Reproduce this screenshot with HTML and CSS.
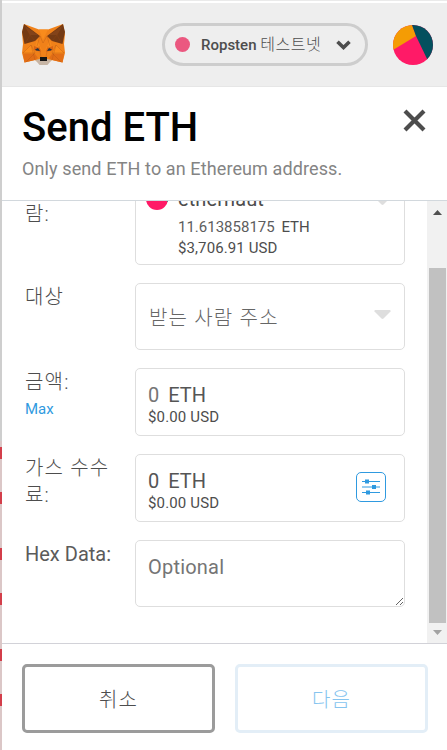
FILE: index.html
```html
<!DOCTYPE html>
<html lang="ko">
<head>
<meta charset="utf-8">
<title>Send ETH</title>
<link rel="stylesheet" href="styles.css">
</head>
<body>
<div class="window">
  <div class="edge">
    <i class="mark m1"></i><i class="mark m2"></i><i class="mark m3"></i><i class="mark m4"></i><i class="mark m5"></i><i class="mark m6"></i>
  </div>
  <div class="popup">
    <header class="app-header">
      <svg class="fox" width="43" height="42" viewBox="0 0 43 42">
        <path fill="#f08119" d="M2 0 17 5.500h9L41 0l2 10-1 10 1 9-2.500 9.500L30 36l-5 4h-7l-5-4-10.500 2.500L0 29l1-9L0 9z"/>
        <path fill="#e26e16" d="M1 30h12l3 4-3 2-10.500 2.500zM42 30H30l-3 4 3 2 10.500 2.500z"/>
        <path fill="#f98b1c" d="M17 5.500l4 10.500 5-10.500zM15 16l-2 7 7 3zM28 16l2 7-7 3zM1 29l8-8 4 8zM42 29l-8-8-4 8z"/>
        <path fill="#743a14" d="M2 0 18 12 13 17 2.500 20 0 8zM41 0 25 12l5 5 10.500 3L43 8z"/>
        <path fill="#83431a" d="M3 2 8 11l8 0zM40 2l-5 9-8 0z"/>
        <path fill="none" stroke="#9f4b12" stroke-opacity=".65" stroke-width=".4" d="M3 20 8 11l5 6M8 11 3 2M40 20l-5-9-5 6M35 11l5-9M18 12l3 7 4-7M18 12l-3 10M25 12l3 10M1 29l8-8 4 8zM42 29l-8-8-4 8zM9 21l4 15M34 21l-4 15M17 22l2 11M26 22l-2 11M4 38l9-9M39 38 30 29"/>
        <path fill="#d96514" d="m12 22 6 2 1 4-7-2zM31 22l-6 2-1 4 7-2z"/>
        <path fill="#273342" d="m13 25.500 3-1.500 2 3-4-.5zM30 25.500 27 24l-2 3 4-.5z"/>
        <path fill="#c6b5a5" d="m13.500 36 4.500-1h7l4.500 1-4 5h-8z"/>
        <path fill="#151515" d="M18 33h7v4h-7z"/>
      </svg>
      <div class="network"><span class="dot"></span><span class="network-name">Ropsten <span class="ko">테스트넷</span></span>
        <svg class="chevron" width="15" height="10" viewBox="0 0 15 10"><path d="m1.500 1.700 6 5.800 6-5.800" fill="none" stroke="#4d4d4d" stroke-width="3.600"/></svg>
      </div>
      <svg class="avatar" width="40" height="40" viewBox="0 0 40 40">
        <defs><clipPath id="round"><circle cx="20" cy="20" r="20"/></clipPath></defs>
        <g clip-path="url(#round)"><path fill="#ff1a67" d="M0 0h40v40H0z"/><path fill="#f49c04" d="M0 0h19l4 11L0 25z"/><path fill="#03505e" d="M19 0h21v40h-3L23 11z"/></g>
      </svg>
    </header>
    <div class="page-header">
      <div class="title-row"><h1>Send ETH</h1>
        <svg class="close" width="23" height="23" viewBox="0 0 23 23"><path d="m2 2 19 19M21 2 2 21" stroke="#4d4d4d" stroke-width="4.2"/></svg>
      </div>
      <p>Only send ETH to an Ethereum address.</p>
    </div>
    <div class="content">
      <main class="form">
        <div class="row from"><div class="label ko">람:</div>
          <div class="box account">
            <span class="account-icon"></span>
            <div class="account-info"><div class="account-name">ethernaut</div><div class="balance">11.613858175 <span>ETH</span></div><div class="usd">$3,706.91 USD</div></div>
            <svg class="caret" width="17" height="10" viewBox="0 0 17 10"><path fill="#dedede" d="M1 0h15q1 .5.5 1.500L9.500 8.500q-1 .8-2 0L.5 1.500Q0 .5 1 0z"/></svg>
          </div>
        </div>
        <div class="row to"><div class="label ko">대상</div>
          <div class="box recipient"><span class="ko">받는 사람 주소</span>
            <svg class="caret" width="17" height="10" viewBox="0 0 17 10"><path fill="#dedede" d="M1 0h15q1 .5.5 1.500L9.500 8.500q-1 .8-2 0L.5 1.500Q0 .5 1 0z"/></svg>
          </div>
        </div>
        <div class="row"><div class="label ko">금액:<a class="max">Max</a></div>
          <div class="box amount"><div class="value"><span class="zero muted">0</span>ETH</div><div class="fiat">$0.00 USD</div></div>
        </div>
        <div class="row"><div class="label ko">가스 수수료:</div>
          <div class="box gas"><div class="amount"><div class="value"><span class="zero">0</span>ETH</div><div class="fiat">$0.00 USD</div></div>
            <div class="adjust"><svg width="18" height="16" viewBox="0 0 18 16"><path d="M0 2.500h18M0 8h18M0 13.500h18" stroke="#2f9ae0"/><path fill="#2f9ae0" d="M3 .5h4v4H3zM10 6h4v4h-4zM4 11.500h4v4H4z"/></svg></div>
          </div>
        </div>
        <div class="row hex"><div class="label">Hex Data:</div><textarea class="box" placeholder="Optional"></textarea></div>
      </main>
      <div class="scrollbar">
        <svg width="9" height="5" viewBox="0 0 9 5"><path fill="#505050" d="M4.500 0 9 5H0z"/></svg>
        <div class="thumb"></div>
        <svg width="9" height="5" viewBox="0 0 9 5"><path fill="#a3a3a3" d="M0 0h9L4.500 5z"/></svg>
      </div>
    </div>
    <footer><button class="cancel ko">취소</button><button class="next ko">다음</button></footer>
  </div>
</div>
</body>
</html>
```
FILE: styles.css
```css
* { box-sizing: border-box; }
body { margin: 0; font-family: Roboto, "Noto Sans CJK KR", sans-serif; color: #4d4d4d; background: #fff; }
.window { display: flex; width: 447px; height: 750px; overflow: hidden; }
.edge { position: relative; width: 2px; flex: none; background: linear-gradient(#cecece 441px, #dbc7c7 441px); }
.mark { position: absolute; left: 0; width: 2px; height: 12px; background: #d33e4a; }
.m1 { top: 447px; } .m2 { top: 492px; } .m3 { top: 548px; } .m4 { top: 593px; } .m5 { top: 649px; } .m6 { top: 694px; }
.popup { display: flex; flex-direction: column; width: 445px; border-top: 1px solid #eaeaea; }
.ko { font-family: Roboto, "Noto Sans CJK KR", sans-serif; font-weight: 300; letter-spacing: 1.2px; }
.app-header { display: flex; align-items: center; height: 84px; margin-top: 2px; padding: 0 14px 0 20px; background: #eee; border-bottom: 1px solid #e6e6e6; flex: none; }
.network { display: flex; align-items: center; width: 206px; height: 43px; margin-left: 97px; padding: 0 14px 0 10px; border: 3px solid #cdcdcd; border-radius: 22px; }
.dot { width: 15px; height: 15px; border-radius: 50%; background: #eb5880; margin-right: 11px; }
.network-name { font-size: 15px; font-weight: 500; line-height: 20px; white-space: nowrap; }
.network-name .ko { font-size: 16px; letter-spacing: .5px; font-weight: 300; }
.chevron { margin-left: auto; }
.avatar { margin-left: 25px; }
.page-header { height: 114px; flex: none; padding: 17px 20px 0; border-bottom: 1px solid #d2d8dd; }
.title-row { display: flex; justify-content: space-between; height: 51px; }
h1 { margin: 0; font-size: 40px; line-height: 47px; font-weight: 500; color: #000; }
.close { margin: 5px 1px 0 0; }
p { margin: 2px 0 0; font-size: 18px; line-height: 24px; letter-spacing: .11px; color: #848484; }
.content { display: flex; height: 442px; overflow: hidden; flex: none; }
.form { width: 425px; padding: 0 22px 0 23px; margin-top: -20px; }
.row { display: flex; height: 68px; margin-bottom: 18px; }
.label { width: 110px; padding: 1px 16px 0 0; font-size: 20px; line-height: 27px; flex: none; white-space: normal; color: #5b5b5b; }
.label.ko { padding-right: 12px; color: #4d4d4d; }
.box { width: 270px; height: 100%; border: 1px solid #dedede; border-radius: 5px; }
.from { height: 84px; }
.from .label { padding-top: 20px; }
.to { height: 67px; }
.account { display: flex; padding: 5px 13px 0 10px; }
.account-icon { width: 22px; height: 22px; margin-top: 1px; border-radius: 50%; background: linear-gradient(65deg, #ff1a67 78%, #03505e 78%); }
.account-info { margin-left: 10px; line-height: 21px; font-size: 15px; }
.account-name { font-size: 20px; line-height: 24px; height: 30px; letter-spacing: .1px; }
.balance { font-weight: 400; color: #5d5d5d; }
.balance span { margin-left: 3px; color: #4d4d4d; }
.usd { letter-spacing: .1px; }
.account .caret { margin: 9px 0 0 auto; }
.recipient { display: flex; align-items: center; justify-content: space-between; padding: 0 13px; font-size: 20px; color: #666; }
.recipient .caret { margin-top: -4px; }
.max { display: block; font-size: 15px; line-height: 26px; font-weight: 400; letter-spacing: 0; color: #2f9ae0; }
.value { font-size: 20px; line-height: 24px; color: #555; }
.zero { margin-right: 9px; }
.muted { color: #757575; }
.fiat { font-size: 15px; line-height: 20px; letter-spacing: .15px; }
.amount { padding: 14px 12px 0; }
.gas { display: flex; justify-content: space-between; }
.adjust { display: flex; align-items: center; justify-content: center; width: 30px; height: 30px; margin: 17px 18px 0 0; border: 1px solid #2f9ae0; border-radius: 5px; }
textarea { margin: 0; padding: 14px 12px; font: 20px/24px Roboto, sans-serif; letter-spacing: .2px; background: #fff; outline: none; }
.hex { height: 67px; }
.scrollbar { display: flex; flex-direction: column; align-items: center; width: 20px; padding: 9px 0 0; background: #f1f1f1; }
.thumb { width: 17px; height: 355px; margin: 53px 0 7px; background: #c1c1c1; }
footer { display: flex; gap: 20px; height: 107px; padding: 20px 0 0 20px; border-top: 1px solid #d2d2d8; }
button { width: 193px; height: 69px; padding: 0; background: #fff; border: 3px solid #9b9b9b; border-radius: 5px; font-size: 20px; color: #4d4d4d; flex: none; }
.next { color: #86c4ef; border-color: #e3eef7; }
```
